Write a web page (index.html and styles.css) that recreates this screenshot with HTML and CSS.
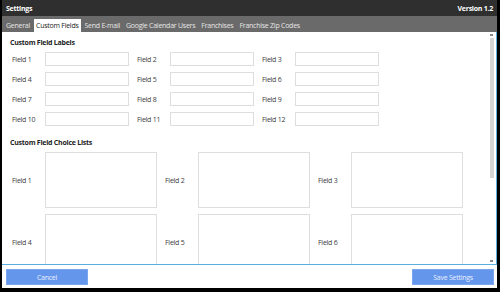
FILE: index.html
```html
<!DOCTYPE html>
<html>
<head>
<meta charset="utf-8">
<link rel="stylesheet" href="styles.css">
</head>
<body>
<div class="window">
  <div class="titlebar">
    <span class="title">Settings</span>
    <span class="version">Version 1.2</span>
  </div>
  <div class="tabs">
    <span class="tab">General</span>
    <span class="tab active">Custom Fields</span>
    <span class="tab">Send E-mail</span>
    <span class="tab">Google Calendar Users</span>
    <span class="tab">Franchises</span>
    <span class="tab">Franchise Zip Codes</span>
  </div>
  <div class="content">
    <div class="scroll">
      <div class="section-title">Custom Field Labels</div>
      <div class="labels-grid">
        <div class="cell"><span class="lbl">Field 1</span><span class="input"></span></div>
        <div class="cell"><span class="lbl">Field 2</span><span class="input"></span></div>
        <div class="cell"><span class="lbl">Field 3</span><span class="input"></span></div>
        <div class="cell"><span class="lbl">Field 4</span><span class="input"></span></div>
        <div class="cell"><span class="lbl">Field 5</span><span class="input"></span></div>
        <div class="cell"><span class="lbl">Field 6</span><span class="input"></span></div>
        <div class="cell"><span class="lbl">Field 7</span><span class="input"></span></div>
        <div class="cell"><span class="lbl">Field 8</span><span class="input"></span></div>
        <div class="cell"><span class="lbl">Field 9</span><span class="input"></span></div>
        <div class="cell"><span class="lbl">Field 10</span><span class="input"></span></div>
        <div class="cell"><span class="lbl">Field 11</span><span class="input"></span></div>
        <div class="cell"><span class="lbl">Field 12</span><span class="input"></span></div>
      </div>
      <div class="section-title second">Custom Field Choice Lists</div>
      <div class="lists-grid">
        <div class="lcell"><span class="lbl">Field 1</span><span class="box"></span></div>
        <div class="lcell"><span class="lbl">Field 2</span><span class="box"></span></div>
        <div class="lcell"><span class="lbl">Field 3</span><span class="box"></span></div>
        <div class="lcell"><span class="lbl">Field 4</span><span class="box"></span></div>
        <div class="lcell"><span class="lbl">Field 5</span><span class="box"></span></div>
        <div class="lcell"><span class="lbl">Field 6</span><span class="box"></span></div>
      </div>
    </div>
    <div class="scrollbar">
      <span class="arrow up"></span>
      <span class="thumb"></span>
      <span class="arrow down"></span>
    </div>
  </div>
  <div class="footer">
    <button class="btn">Cancel</button>
    <button class="btn">Save Settings</button>
  </div>
</div>
</body>
</html>
```

FILE: styles.css
```css
html, body {
  margin: 0;
  padding: 0;
  background: #000;
  width: 500px;
  height: 292px;
  overflow: hidden;
}
.window {
  margin: 0 3px 0 2px;
  height: 288px;
  display: flex;
  flex-direction: column;
  background: #fff;
  font-family: "Open Sans", "Noto Sans", sans-serif;
  font-size: 7px;
  letter-spacing: -0.25px;
  color: #3c3c3c;
}
.titlebar {
  height: 16px;
  background: #2f2f2f;
  color: #fff;
  font-weight: bold;
  display: flex;
  justify-content: space-between;
  align-items: center;
  padding: 0 4px 0 4px;
}
.tabs {
  height: 16px;
  background: #6a6a6a;
  display: flex;
  align-items: flex-end;
  padding-left: 2px;
}
.tab {
  color: #e6e6e6;
  padding: 0 2px;
  margin-right: 2px;
  height: 13px;
  line-height: 13px;
}
.tab.active {
  background: #fff;
  color: #222;
}
.content {
  flex: 1;
  display: flex;
  border-right: 1px solid #5aaee0;
  border-bottom: 1px solid #5aaee0;
  overflow: hidden;
  min-height: 0;
}
.scroll {
  flex: 1;
  padding: 6px 0 0 8px;
  overflow: hidden;
}
.section-title {
  font-weight: bold;
  color: #222;
  height: 9px;
  line-height: 9px;
}
.labels-grid {
  display: grid;
  grid-template-columns: repeat(3, 125px);
  row-gap: 6px;
  margin-top: 5px;
}
.cell {
  display: flex;
  align-items: center;
}
.lbl {
  width: 33px;
  padding-left: 2px;
  flex: none;
}
.input {
  width: 82px;
  height: 12px;
  border: 1px solid #dedede;
  display: block;
}
.section-title.second {
  margin-top: 12px;
}
.lists-grid {
  display: grid;
  grid-template-columns: 153px 153px 153px;
  row-gap: 6px;
  margin-top: 5px;
}
.lcell {
  display: flex;
  align-items: center;
}
.box {
  width: 110px;
  height: 54px;
  border: 1px solid #dedede;
  display: block;
}
.scrollbar {
  width: 7px;
  display: flex;
  flex-direction: column;
  align-items: center;
  padding: 2px 0;
  margin-right: 1px;
}
.arrow {
  width: 3px;
  height: 2px;
  background: #888;
  display: block;
}
.thumb {
  width: 4px;
  height: 140px;
  background: #d4d4d4;
  margin-top: 2px;
  display: block;
}
.arrow.down {
  margin-top: auto;
}
.footer {
  height: 22px;
  display: flex;
  justify-content: space-between;
  align-items: center;
  padding: 1px 3px 0 4px;
}
.btn {
  width: 82px;
  height: 16px;
  background: #6496ec;
  border: 1px solid #7aa6f0;
  color: #e8efff;
  font-family: inherit;
  font-size: 7px;
  letter-spacing: -0.25px;
  padding: 0;
}
```
